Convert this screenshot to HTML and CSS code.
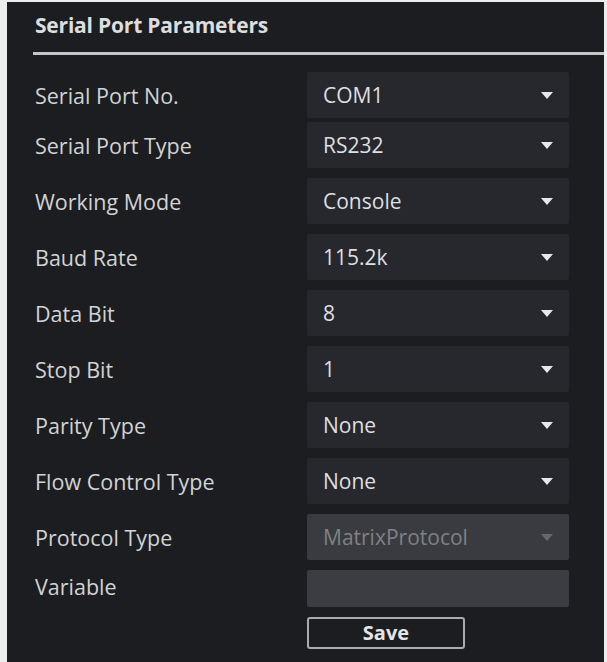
FILE: index.html
```html
<!DOCTYPE html>
<html>
<head>
<meta charset="utf-8">
<link rel="stylesheet" href="styles.css">
</head>
<body>
<div class="panel">
  <div class="title">Serial Port Parameters</div>
  <div class="rule"></div>
  <div class="form">
    <div class="row first"><span class="label">Serial Port No.</span><div class="select"><span>COM1</span><i class="arrow"></i></div></div>
    <div class="row"><span class="label">Serial Port Type</span><div class="select"><span>RS232</span><i class="arrow"></i></div></div>
    <div class="row"><span class="label">Working Mode</span><div class="select"><span>Console</span><i class="arrow"></i></div></div>
    <div class="row"><span class="label">Baud Rate</span><div class="select"><span>115.2k</span><i class="arrow"></i></div></div>
    <div class="row"><span class="label">Data Bit</span><div class="select"><span>8</span><i class="arrow"></i></div></div>
    <div class="row"><span class="label">Stop Bit</span><div class="select"><span>1</span><i class="arrow"></i></div></div>
    <div class="row"><span class="label">Parity Type</span><div class="select"><span>None</span><i class="arrow"></i></div></div>
    <div class="row"><span class="label">Flow Control Type</span><div class="select"><span>None</span><i class="arrow"></i></div></div>
    <div class="row"><span class="label">Protocol Type</span><div class="select disabled"><span>MatrixProtocol</span><i class="arrow"></i></div></div>
    <div class="row short"><span class="label">Variable</span><div class="input"></div></div>
    <div class="row actions"><span class="label"></span><button class="save">Save</button></div>
  </div>
</div>
</body>
</html>
```
FILE: styles.css
```css
html, body {
  margin: 0;
  padding: 0;
  background: #eceded;
  height: 662px;
  overflow: hidden;
}
.panel {
  margin: 2px 3px 0 7px;
  height: 660px;
  background: #1b1d20;
  font-family: "Open Sans", "Noto Sans", sans-serif;
  color: #d6d7d8;
  padding: 9px 0 0 28px;
  box-sizing: border-box;
}
.title {
  font-weight: 700;
  font-size: 21px;
  line-height: 28px;
  color: #dcdddf;
  letter-spacing: -0.2px;
}
.rule {
  height: 3px;
  background: #c4c6c8;
  margin: 13px 0 0 -2px;
}
.form {
  display: flex;
  flex-direction: column;
  gap: 10px;
  margin-top: 17px;
}
.row {
  display: flex;
  align-items: center;
}
.row.first {
  margin-bottom: -6px;
}
.label {
  width: 272px;
  font-size: 21.5px;
  color: #d2d3d5;
}
.select, .input {
  width: 262px;
  height: 46px;
  background: #26282d;
  border-radius: 2px;
  display: flex;
  align-items: center;
  justify-content: space-between;
  padding: 0 16px;
  box-sizing: border-box;
  font-size: 21px;
  color: #dedfe0;
}
.select .arrow {
  width: 0;
  height: 0;
  border-left: 6px solid transparent;
  border-right: 6px solid transparent;
  border-top: 7px solid #e6e7e8;
}
.select.disabled {
  background: #393b40;
  color: #7f8185;
}
.select.disabled .arrow {
  border-top-color: #66686c;
}
.input {
  height: 37px;
  background: #3b3d42;
}
.row.short .label {
  align-self: flex-start;
  margin-top: 2px;
}
.save {
  width: 158px;
  height: 32px;
  background: #1b1d20;
  border: 2px solid #a9abae;
  border-radius: 3px;
  color: #e4e5e6;
  font-family: "Open Sans", "Noto Sans", sans-serif;
  font-weight: 700;
  font-size: 20px;
  padding: 0;
  line-height: 28px;
}
```
